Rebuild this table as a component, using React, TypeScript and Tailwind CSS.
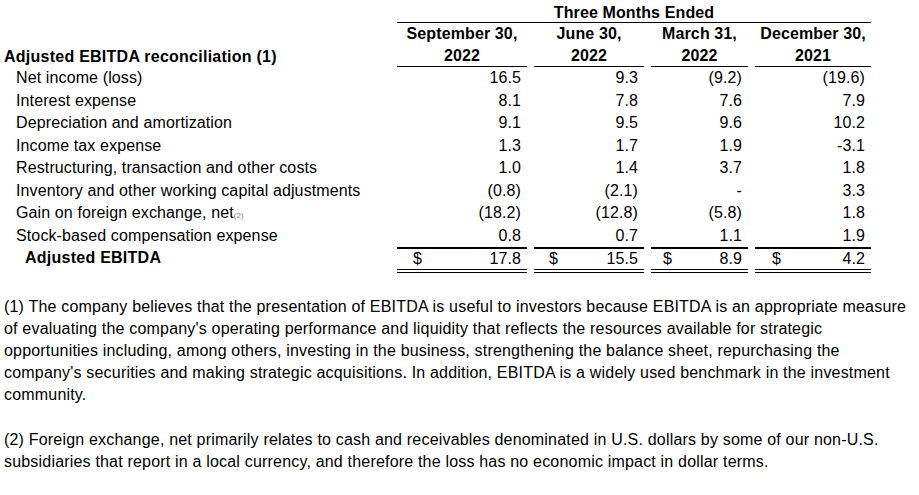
const ROWS = [
  { label: "Net income (loss)", values: ["16.5", "9.3", "(9.2)", "(19.6)"] },
  { label: "Interest expense", values: ["8.1", "7.8", "7.6", "7.9"] },
  { label: "Depreciation and amortization", values: ["9.1", "9.5", "9.6", "10.2"] },
  { label: "Income tax expense", values: ["1.3", "1.7", "1.9", "-3.1"] },
  { label: "Restructuring, transaction and other costs", values: ["1.0", "1.4", "3.7", "1.8"] },
  { label: "Inventory and other working capital adjustments", values: ["(0.8)", "(2.1)", "-", "3.3"] },
  { label: "Gain on foreign exchange, net", note: "(2)", values: ["(18.2)", "(12.8)", "(5.8)", "1.8"] },
  { label: "Stock-based compensation expense", values: ["0.8", "0.7", "1.1", "1.9"] },
];

const PERIODS = [
  { month: "September 30,", year: "2022" },
  { month: "June 30,", year: "2022" },
  { month: "March 31,", year: "2022" },
  { month: "December 30,", year: "2021" },
];

// padding before the "$" in each total cell
const DOLLAR_PAD = ["pl-[16px]", "pl-[15px]", "pl-[12px]", "pl-[17px]"];
const TOTALS = ["17.8", "15.5", "8.9", "4.2"];

const NOTE_1 = [
  "(1) The company believes that the presentation of EBITDA is useful to investors because EBITDA is an appropriate measure",
  "of evaluating the company's operating performance and liquidity that reflects the resources available for strategic",
  "opportunities including, among others, investing in the business, strengthening the balance sheet, repurchasing the",
  "company's securities and making strategic acquisitions. In addition, EBITDA is a widely used benchmark in the investment",
  "community.",
];

const NOTE_2 = [
  "(2) Foreign exchange, net primarily relates to cash and receivables denominated in U.S. dollars by some of our non-U.S.",
  "subsidiaries that report in a local currency, and therefore the loss has no economic impact in dollar terms.",
];

export default function App() {
  return (
    <div
      className="w-[919px] h-[495px] bg-white text-black text-[16px] overflow-hidden tracking-[0.12px]"
      style={{ fontFamily: '"Liberation Sans", Arial, sans-serif' }}
    >
      <div className="grid grid-cols-[390px_130px_110px_97px_116px] gap-x-[7px] pt-[1px]">
        {/* Header */}
        <div />
        <div className="col-span-4 h-[22px] leading-[23px] border-b border-black text-center font-bold">
          Three Months Ended
        </div>

        <div className="h-[44px] flex items-end pl-[4px] font-bold leading-[21.5px] tracking-[0.25px]">
          Adjusted EBITDA reconciliation (1)
        </div>
        {PERIODS.map((p) => (
          <div
            key={p.month}
            className="h-[44px] border-b border-black text-center font-bold leading-[21.5px]"
          >
            <div>{p.month}</div>
            <div>{p.year}</div>
          </div>
        ))}

        {/* Body rows */}
        {ROWS.map((row) => (
          <div key={row.label} className="contents">
            <div className="h-[22.5px] leading-[22.5px] pl-[16px] whitespace-nowrap">
              {row.label}
              {row.note && (
                <span className="text-[8px] text-[#808080] tracking-normal">{row.note}</span>
              )}
            </div>
            {row.values.map((v, i) => (
              <div key={i} className="h-[22.5px] leading-[22.5px] text-right pr-[6px]">
                {v}
              </div>
            ))}
          </div>
        ))}

        {/* Total */}
        <div className="h-[26px] leading-[22px] pl-[25px] font-bold tracking-[0.25px]">
          Adjusted EBITDA
        </div>
        {TOTALS.map((t, i) => (
          <div
            key={i}
            className={`h-[26px] leading-[20px] border-t-2 border-b-4 border-double border-t-black border-b-black flex justify-between pr-[6px] ${DOLLAR_PAD[i]}`}
            style={{ borderTopStyle: "solid" }}
          >
            <span>$</span>
            <span>{t}</span>
          </div>
        ))}
      </div>

      {/* Footnotes */}
      <div className="px-[4px] mt-[23px] leading-[22px] tracking-[0.19px] whitespace-nowrap">
        <p>
          {NOTE_1.map((line) => (
            <span key={line} className="block">
              {line}
            </span>
          ))}
        </p>
        <p className="mt-[23px]">
          {NOTE_2.map((line) => (
            <span key={line} className="block">
              {line}
            </span>
          ))}
        </p>
      </div>
    </div>
  );
}
